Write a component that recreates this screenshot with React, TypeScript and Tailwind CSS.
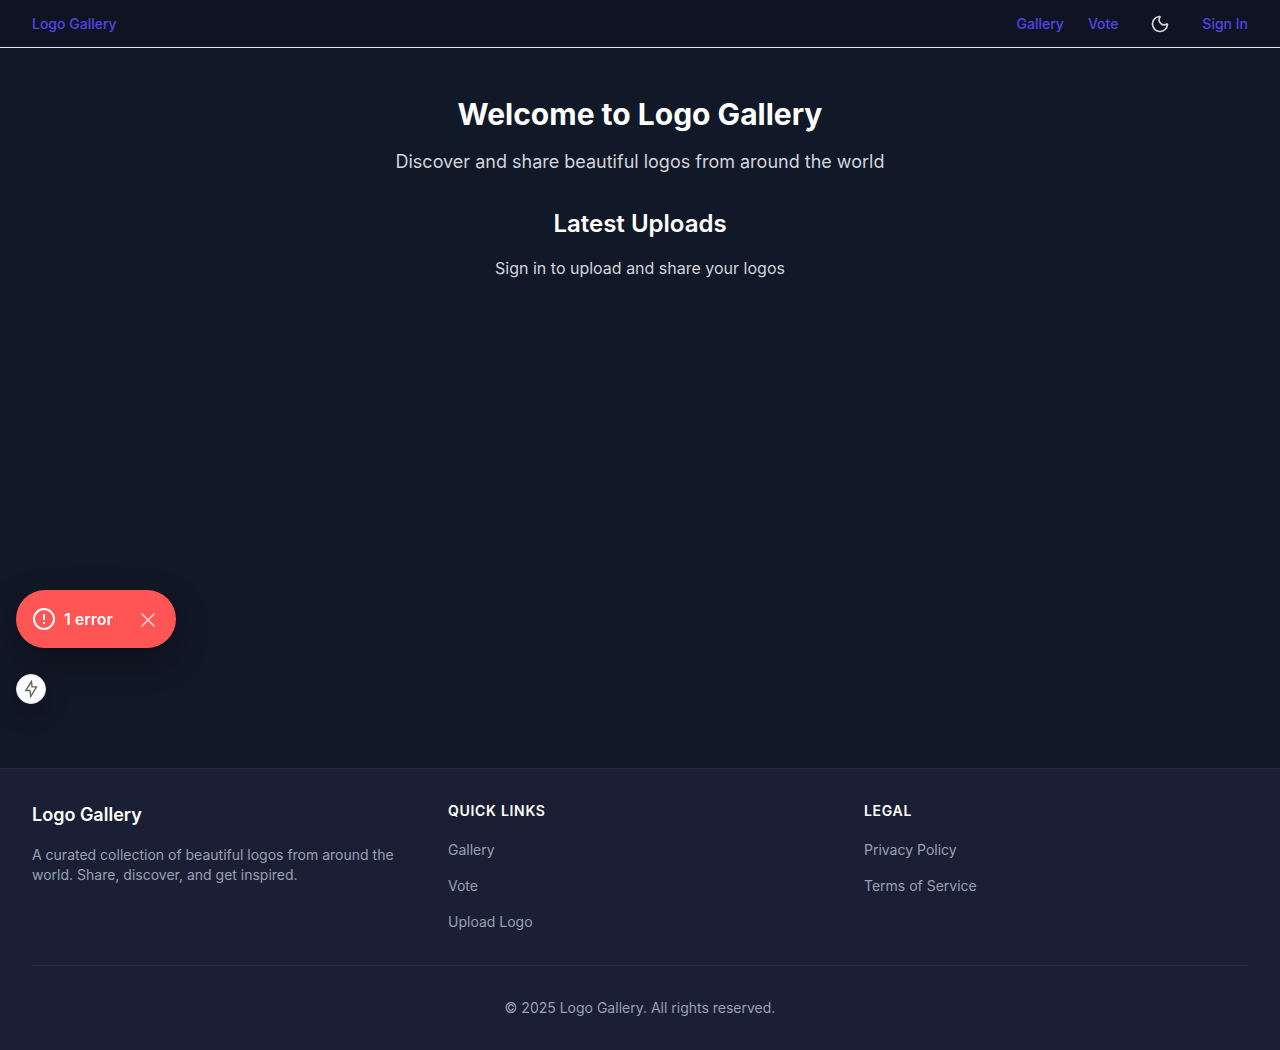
import React from "react";
import { Moon } from "lucide-react";

const quickLinks = ["Gallery", "Vote", "Upload Logo"];
const legalLinks = ["Privacy Policy", "Terms of Service"];

function FooterLinks({ title, items }: { title: string; items: string[] }) {
  return (
    <nav aria-label={title}>
      <h3 className="text-sm font-semibold uppercase tracking-wider text-white">{title}</h3>
      <ul className="mt-4 space-y-3">
        {items.map((item) => (
          <li key={item}>
            <a href="#" className="text-sm text-gray-400">{item}</a>
          </li>
        ))}
      </ul>
    </nav>
  );
}

export default function App() {
  return (
    <div className="flex min-h-screen flex-col bg-[#111827] font-['Inter',sans-serif] text-white antialiased">
      <header className="flex h-12 items-center justify-between border-b border-gray-200 bg-[#0f1424] px-8 text-sm font-medium text-[#4f46e5]">
        <a href="#">Logo Gallery</a>
        <nav className="flex items-center gap-6">
          <a href="#">Gallery</a>
          <a href="#">Vote</a>
          <button type="button" aria-label="Toggle dark mode" className="p-2 text-gray-300">
            <Moon size={20} strokeWidth={2} />
          </button>
          <a href="#">Sign In</a>
        </nav>
      </header>

      <main className="flex-1 px-8 pt-12 text-center">
        <h1 className="text-3xl font-bold leading-9">Welcome to Logo Gallery</h1>
        <p className="mt-4 text-lg text-gray-300">Discover and share beautiful logos from around the world</p>
        <h2 className="mt-8 text-2xl font-semibold">Latest Uploads</h2>
        <p className="mt-4 text-gray-300">Sign in to upload and share your logos</p>
      </main>

      <footer className="border-t border-[#252a3d] bg-[#1a1f36] px-8 py-8">
        <div className="grid grid-cols-3 gap-8">
          <div>
            <h3 className="text-lg font-semibold">Logo Gallery</h3>
            <p className="mt-4 text-sm text-gray-400">
              A curated collection of beautiful logos from around the world. Share, discover, and get inspired.
            </p>
          </div>
          <FooterLinks title="Quick Links" items={quickLinks} />
          <FooterLinks title="Legal" items={legalLinks} />
        </div>
        <p className="mt-8 border-t border-[#252a3d] pt-8 text-center text-sm text-gray-400">
          © 2025 Logo Gallery. All rights reserved.
        </p>
      </footer>

      <div className="fixed top-[590px] left-4 flex h-[58px] w-40 items-center rounded-full bg-[#ff5555] px-4 shadow-[0_12px_32px_rgba(0,0,0,0.35)]">
        <svg width="24" height="24" viewBox="0 0 24 24" fill="none" stroke="white" strokeWidth="2" aria-hidden="true">
          <circle cx="12" cy="12" r="10" />
          <path d="M12 7v6M12 15v2" />
        </svg>
        <span className="ml-2 font-semibold">1 error</span>
        <button type="button" aria-label="Dismiss error" className="ml-auto">
          <svg width="24" height="24" viewBox="0 0 24 24" fill="none" stroke="white" strokeOpacity="0.7" strokeWidth="1.7" strokeLinecap="round">
            <path d="M6 7l12 12M18 7L6 19" />
          </svg>
        </button>
      </div>
      <button type="button" aria-label="Route status" className="fixed top-[674px] left-4 flex size-[30px] items-center justify-center rounded-full border border-gray-200 bg-white text-[#666666] shadow-[0_8px_24px_rgba(0,0,0,0.3)]">
        <svg width="16" height="18" viewBox="0 0 16 18" fill="none" stroke="currentColor" strokeWidth="1.4" strokeLinejoin="miter">
          <path d="M8.500 1.500L2.700 10.500H7L7.700 16.500L13.500 6.900H9z" />
        </svg>
      </button>
    </div>
  );
}
